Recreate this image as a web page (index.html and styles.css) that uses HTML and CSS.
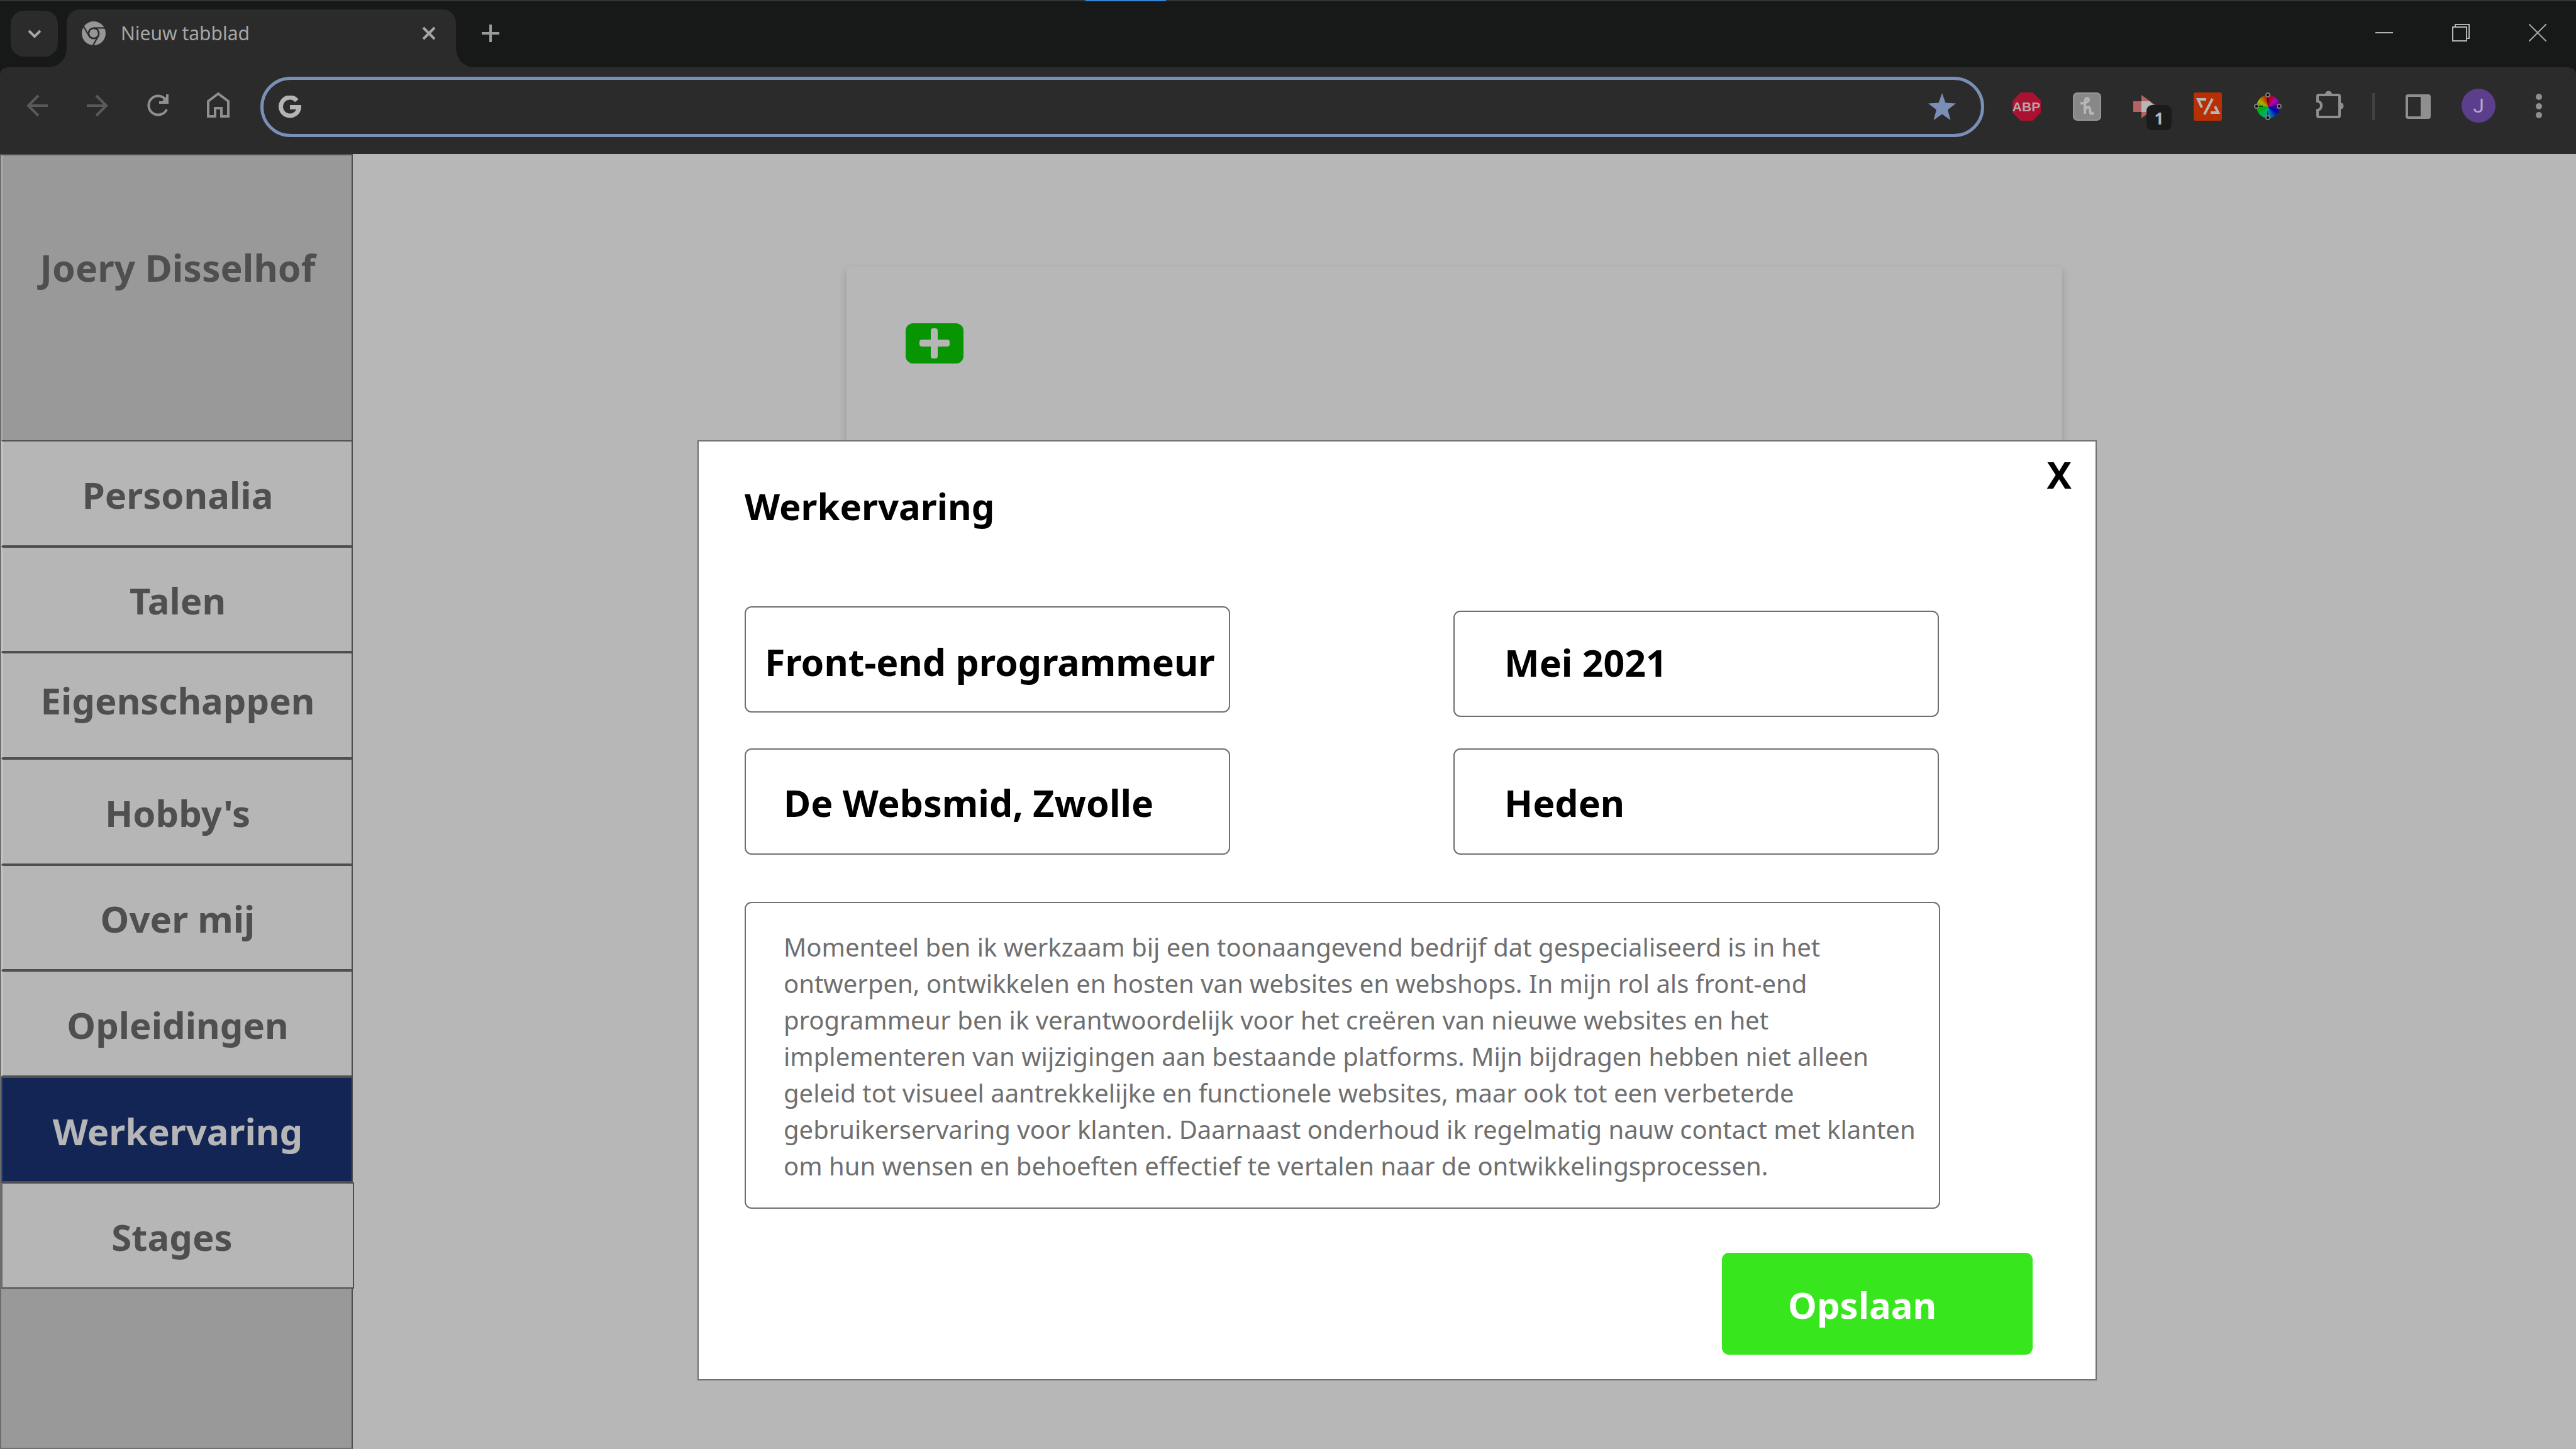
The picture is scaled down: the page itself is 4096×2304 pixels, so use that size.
FILE: index.html
```html
<!DOCTYPE html>
<html lang="nl">
<head>
<meta charset="utf-8">
<title>Werkervaring</title>
<link rel="stylesheet" href="styles.css">
</head>
<body>
<header class="browser">
  <span class="load-bar"></span>
  <div class="tab-strip">
    <button class="tab-search" aria-label="Tabbladen zoeken">
      <svg width="30" height="30" viewBox="0 0 30 30" fill="none" stroke="#a6a6a6" stroke-width="4"><path d="M6 10l9 9 9-9"/></svg>
    </button>
    <div class="tab">
      <svg class="tab-icon" viewBox="0 0 24 24">
        <circle cx="12" cy="12" r="12" fill="#969696"/>
        <circle cx="12" cy="12" r="6" fill="#2b2b2b"/>
        <circle cx="12" cy="12" r="4.3" fill="#969696"/>
        <g stroke="#2b2b2b" stroke-width="1.4"><path d="M12 6.6H24"/><path d="M12 6.6H24" transform="rotate(120 12 12)"/><path d="M12 6.6H24" transform="rotate(240 12 12)"/></g>
      </svg>
      <span class="tab-title">Nieuw tabblad</span>
      <button class="plain" aria-label="Tabblad sluiten">
        <svg width="24" height="24" viewBox="0 0 24 24" stroke="#a6a6a6" stroke-width="4"><path d="M3 3l18 18M21 3L3 21"/></svg>
      </button>
    </div>
    <button class="plain new-tab" aria-label="Nieuw tabblad openen">
      <svg width="28" height="28" viewBox="0 0 28 28" stroke="#9a9a9a" stroke-width="4"><path d="M14 0v28M0 14h28"/></svg>
    </button>
    <div class="window-controls">
      <button class="plain" aria-label="Minimaliseren"><svg width="28" height="28" viewBox="0 0 28 28" stroke="#b4b4b4" stroke-width="2"><path d="M0 14h28"/></svg></button>
      <button class="plain" aria-label="Verkleinen"><svg width="28" height="28" viewBox="0 0 28 28" fill="none" stroke="#b4b4b4" stroke-width="2"><path d="M1 5h22v22H1zM5 5V1h22v22h-4"/></svg></button>
      <button class="plain" aria-label="Sluiten"><svg width="28" height="28" viewBox="0 0 28 28" stroke="#a6a6a6" stroke-width="2"><path d="M0 0l28 28M28 0L0 28"/></svg></button>
    </div>
  </div>
  <div class="toolbar">
    <button class="tool" aria-label="Terug"><svg viewBox="0 0 96 96" fill="none" stroke="#5a5a5a" stroke-width="4"><path d="M65 47H34M50 31L34 47l16 16"/></svg></button>
    <button class="tool" aria-label="Vooruit"><svg viewBox="0 0 96 96" fill="none" stroke="#5a5a5a" stroke-width="4"><path d="M31 47h31M46 31l16 16-16 16"/></svg></button>
    <button class="tool" aria-label="Vernieuwen"><svg viewBox="0 0 96 96" fill="none" stroke="#8f8f8f" stroke-width="4"><path d="M62 53A15 15 0 1 1 60 37"/><path d="M63 29v13H50"/><path d="M61 33v8H54z" fill="#8f8f8f" stroke="none"/></svg></button>
    <button class="tool" aria-label="Startpagina"><svg viewBox="0 0 96 96" fill="none" stroke="#8f8f8f" stroke-width="4"><path d="M32 40L48 28l16 12v24H53V51H43v13H32z"/></svg></button>
    <div class="omnibox">
      <svg class="google" viewBox="0 0 36 37" fill="none" stroke="#b4b4b4" stroke-width="7"><path d="M29 8A14.500 14.500 0 1 0 32.500 18.500H18"/></svg>
      <input class="address" type="text" aria-label="Adresbalk">
      <svg class="star" viewBox="0 0 44 44" fill="#7a8fb6"><path d="M22 0l5.500 15.500L44 16.500 31 26.500 35.500 43 22 33.500 8.500 43 13 26.500 0 16.500l16.500-1z"/></svg>
    </div>
    <button class="tool" aria-label="ABP"><svg viewBox="0 0 96 96"><path d="M39 26h19l13 13v19L58 71H39L26 58V39z" fill="#ab1130"/><text class="abp" x="48" y="56" text-anchor="middle">ABP</text></svg></button>
    <button class="tool" aria-label="Honey"><svg viewBox="0 0 96 96" fill="none"><rect x="27" y="27" width="43" height="43" rx="6" fill="#888" stroke="#969696" stroke-width="2"/><path d="M38 43c8 1 14-3 13-6-1-4-6-2-6 5v18M45 54c2-6 8-6 8-2l1 7q2 2 5-1" stroke="#b6b6b6" stroke-width="4"/></svg></button>
    <button class="tool" aria-label="Meldingen, 1"><svg viewBox="0 0 96 96"><path d="M26 40h13V30l25 18-25 19V57H26z" fill="#b76262"/><path d="M39 40h13l8 8-8 9H39z" fill="#b6b6b6"/><rect x="47" y="46" width="40" height="40" rx="9" fill="#1b1b1b"/><text class="badge" x="67" y="77" text-anchor="middle">1</text></svg></button>
    <button class="tool" aria-label="Extensie"><svg viewBox="0 0 96 96" fill="none" stroke="#b6b6b6" stroke-width="4"><rect x="26" y="26" width="45" height="45" rx="3" fill="#b63004" stroke="none"/><path d="M46 37H33l6 13M56 36L43 61M60 48l5 10H53"/></svg></button>
    <button class="tool color-tool" aria-label="Kleurkiezer"><span class="wheel"></span><svg viewBox="0 0 96 96" fill="#000" stroke="#7d7d7d" stroke-width="2"><path d="M48 30v12M48 56v10M30 48h10M58 48h10" stroke="#000" stroke-opacity=".6"/><circle cx="48" cy="30" r="3"/><circle cx="48" cy="66" r="3"/><circle cx="30" cy="48" r="3"/><circle cx="66" cy="48" r="3"/></svg></button>
    <button class="tool" aria-label="Extensies"><svg viewBox="0 0 96 96" fill="none" stroke="#8f8f8f" stroke-width="4"><path d="M31 30h33q2 0 2 2v31q0 2-2 2H33q-2 0-2-2V54q6-1 6-7t-6-7V32q0-2 2-2z"/><path d="M43 29a5.500 5.500 0 0 1 11 0zM67 42a5.500 5.500 0 0 1 0 11z" fill="#8f8f8f" stroke="none"/></svg></button>
    <span class="divider"></span>
    <button class="tool" aria-label="Zijpaneel"><svg viewBox="0 0 96 96" fill="none" stroke="#8f8f8f" stroke-width="4"><rect x="30" y="31" width="36" height="35" rx="2"/><path d="M52 31h14v35H52z" fill="#8f8f8f" stroke="none"/></svg></button>
    <button class="tool" aria-label="Profiel"><svg viewBox="0 0 96 96"><circle cx="48" cy="47" r="27" fill="#5b3e8c"/><text class="avatar" x="48" y="58" text-anchor="middle">J</text></svg></button>
    <button class="tool" aria-label="Menu"><svg viewBox="0 0 96 96" fill="#8f8f8f"><circle cx="48" cy="33" r="5"/><circle cx="48" cy="48" r="5"/><circle cx="48" cy="62" r="5"/></svg></button>
  </div>
</header>

<div class="page">
  <aside class="sidebar">
    <h1 class="owner">Joery Disselhof</h1>
    <nav class="menu">
      <a class="menu-item" href="#">Personalia</a>
      <a class="menu-item" href="#">Talen</a>
      <a class="menu-item raised" href="#">Eigenschappen</a>
      <a class="menu-item" href="#">Hobby's</a>
      <a class="menu-item" href="#">Over mij</a>
      <a class="menu-item" href="#">Opleidingen</a>
      <a class="menu-item active" href="#" aria-current="page">Werkervaring</a>
      <a class="menu-item last" href="#">Stages</a>
    </nav>
  </aside>
  <main class="content">
    <section class="card">
      <button class="add" aria-label="Toevoegen">
        <svg width="48" height="48" viewBox="0 0 48 48" fill="#b6b6b6"><rect x="18" width="11" height="48" rx="4"/><rect y="18" width="48" height="11" rx="4"/></svg>
      </button>
    </section>
  </main>
</div>

<form class="dialog" role="dialog" aria-labelledby="dialog-title">
  <div class="dialog-head">
    <h2 class="dialog-title" id="dialog-title">Werkervaring</h2>
    <button class="close" type="button" aria-label="Sluiten">X</button>
  </div>
  <div class="fields">
    <div class="column">
      <input class="field tight" type="text" aria-label="Functie" value="Front-end programmeur">
      <input class="field" type="text" aria-label="Bedrijf" value="De Websmid, Zwolle">
    </div>
    <div class="column dates">
      <input class="field" type="text" aria-label="Van" value="Mei 2021">
      <input class="field" type="text" aria-label="Tot" value="Heden">
    </div>
  </div>
  <textarea class="description" aria-label="Omschrijving">Momenteel ben ik werkzaam bij een toonaangevend bedrijf dat gespecialiseerd is in het
ontwerpen, ontwikkelen en hosten van websites en webshops. In mijn rol als front-end
programmeur ben ik verantwoordelijk voor het creëren van nieuwe websites en het
implementeren van wijzigingen aan bestaande platforms. Mijn bijdragen hebben niet alleen
geleid tot visueel aantrekkelijke en functionele websites, maar ook tot een verbeterde
gebruikerservaring voor klanten. Daarnaast onderhoud ik regelmatig nauw contact met klanten
om hun wensen en behoeften effectief te vertalen naar de ontwikkelingsprocessen.</textarea>
  <button class="save" type="submit">Opslaan</button>
</form>
</body>
</html>
```
FILE: styles.css
```css
* { box-sizing: border-box; }

body {
  position: relative;
  display: flex;
  flex-direction: column;
  min-height: 100vh;
  margin: 0;
  background: #b7b7b7;
  font-family: "Noto Sans", "Open Sans", sans-serif;
}

button, input, textarea { font: inherit; margin: 0; }
svg { display: block; flex: none; }

.plain, .tool, .tab-search {
  display: flex;
  align-items: center;
  justify-content: center;
  padding: 0;
  border: 0;
  background: none;
}

/* Browser frame */
.browser {
  position: relative;
  background: #171918;
  border-top: 2px solid #343635;
}

.load-bar {
  position: absolute;
  top: -2px;
  left: 1726px;
  width: 128px;
  height: 2px;
  background: #3586d6;
}

.tab-strip {
  display: flex;
  height: 105px;
  padding: 13px 0 0 17px;
}

.tab-search {
  width: 75px;
  height: 73px;
  margin: 2px 14px 0 0;
  border-radius: 21px;
  background: #2b2b2b;
}

.tab {
  position: relative;
  display: flex;
  align-items: center;
  width: 619px;
  padding: 0 31px 16px 24px;
  border-radius: 21px 21px 0 0;
  background: #2b2b2b;
}

.tab::before, .tab::after {
  content: "";
  position: absolute;
  bottom: 0;
  width: 28px;
  height: 28px;
}

.tab::before {
  left: -28px;
  background: radial-gradient(circle at 0 0, transparent 27px, #2b2b2b 28px);
}

.tab::after {
  right: -28px;
  background: radial-gradient(circle at 100% 0, transparent 27px, #2b2b2b 28px);
}

.tab-icon { width: 38px; height: 38px; }

.tab-title {
  flex: 1;
  padding-left: 24px;
  color: #a6a6a6;
  font-size: 30px;
  line-height: 40px;
}

.new-tab { width: 64px; height: 76px; margin-left: 23px; }

.window-controls {
  display: flex;
  margin-left: auto;
  height: 74px;
}

.window-controls .plain { width: 122px; }

.toolbar {
  display: flex;
  align-items: center;
  height: 138px;
  padding: 0 11px 14px;
  border-radius: 12px 12px 0 0;
  background: #2b2b2b;
}

.tool { flex: none; width: 96px; height: 96px; }
.tool svg { width: 96px; height: 96px; }

.omnibox {
  display: flex;
  flex: 1;
  align-items: center;
  gap: 24px;
  height: 96px;
  margin: 2px 19px 0;
  padding: 0 40px 0 24px;
  border: 5px solid #7a8fb6;
  border-radius: 48px;
}

.google { width: 36px; height: 37px; }
.star { width: 44px; height: 44px; }

.address {
  flex: 1;
  min-width: 0;
  border: 0;
  background: none;
  color: #b4b4b4;
  font-size: 32px;
}

.abp { fill: #b9a3a8; font: bold 21px "Liberation Sans", sans-serif; }
.badge { fill: #b6b6b6; font: bold 26px "Noto Sans", sans-serif; }
.avatar { fill: #b4a8c6; font: 32px Roboto, sans-serif; }

.color-tool { position: relative; }
.color-tool svg { position: absolute; inset: 0; }

.wheel {
  width: 37px;
  height: 37px;
  border-radius: 50%;
  background: conic-gradient(#b00000, #b000b0 50deg, #5000b0 90deg, #0000b0 120deg, #00a0b0 180deg, #00b050 215deg, #00b000 260deg, #b0b000 300deg, #b04000 340deg, #b00000);
}

.divider {
  width: 4px;
  height: 43px;
  margin: 0 21px 0 22px;
  background: #434343;
}

/* Page */
.page { display: flex; flex: 1; }

.sidebar {
  width: 561px;
  border: 2px solid #4f4f4f;
  border-left-color: #6c6c6c;
  border-bottom-color: #727272;
  background: #999;
}

.owner {
  margin: 0;
  padding: 139px 0 235px 2px;
  border-left: 2px solid #b0b0b0;
  color: #4f4f4f;
  font-size: 59px;
  line-height: 79px;
  text-align: center;
}

.menu {
  display: grid;
  grid-auto-rows: 1fr;
  height: 1349px;
}

.menu-item {
  display: flex;
  align-items: center;
  justify-content: center;
  padding: 4px 0 0 2px;
  border: solid #4f4f4f;
  border-width: 2px 0 2px 2px;
  border-left-color: #ccc;
  background: #b6b6b6;
  color: #4f4f4f;
  font-size: 58px;
  font-weight: 700;
  text-decoration: none;
}

.menu-item.raised { padding: 0 0 16px 2px; }

.menu-item.active {
  border-left-color: #2e4a88;
  background: #122554;
  color: #b6b6b6;
}

.menu-item.last {
  margin-right: -4px;
  padding-right: 20px;
  border-right-width: 2px;
  border-left-color: #6c6c6c;
}

.content { flex: 1; padding: 179px 817px 0 785px; }

.card {
  height: 1600px;
  padding: 90px 94px;
  background: #b7b7b7;
  box-shadow: 0 6px 13px rgba(0, 0, 0, .16);
}

.add {
  display: flex;
  align-items: center;
  justify-content: center;
  width: 92px;
  height: 64px;
  padding: 0;
  border: 0;
  border-radius: 12px;
  background: #089504;
}

/* Dialog */
.dialog {
  position: absolute;
  top: 700px;
  left: 1109px;
  width: 2225px;
  padding: 8px 100px 39px 73px;
  border: 2px solid #6f6f6f;
  background: #fff;
}

.dialog-head {
  display: flex;
  align-items: flex-start;
  justify-content: space-between;
  height: 254px;
  margin-right: -66px;
}

.dialog-title {
  margin: 0;
  padding-top: 55px;
  font-size: 58px;
  line-height: 79px;
}

.close {
  padding: 0 4px;
  border: 0;
  background: none;
  color: #000;
  font-size: 59px;
  font-weight: 700;
  line-height: 89px;
}

.fields {
  display: flex;
  justify-content: space-between;
  margin-right: 149px;
}

.column {
  display: flex;
  flex-direction: column;
  gap: 57px;
  width: 772px;
}

.dates { gap: 50px; padding-top: 7px; }

.field {
  width: 100%;
  height: 169px;
  padding: 2px 30px 0 60px;
  border: 2px solid #6f6f6f;
  border-radius: 11px;
  background: #fff;
  color: #000;
  font-size: 59px;
  font-weight: 700;
}

.field.tight { padding: 6px 10px 0 30px; }
.dates .field { padding-left: 79px; }
.dates .field:first-child { padding-bottom: 8px; }

.description {
  display: block;
  width: 1901px;
  height: 488px;
  margin-top: 75px;
  padding: 41px 20px 0 60px;
  border: 2px solid #6f6f6f;
  border-radius: 11px;
  background: #fff;
  color: #6f6f6f;
  font-size: 40px;
  line-height: 58px;
  white-space: pre;
  overflow: hidden;
  resize: none;
}

.save {
  display: block;
  width: 494px;
  height: 162px;
  margin: 70px 0 0 auto;
  padding: 3px 0 0 105px;
  border: 0;
  border-radius: 11px;
  background: #38e61e;
  color: #fff;
  font-size: 58px;
  font-weight: 700;
  text-align: left;
}
```
